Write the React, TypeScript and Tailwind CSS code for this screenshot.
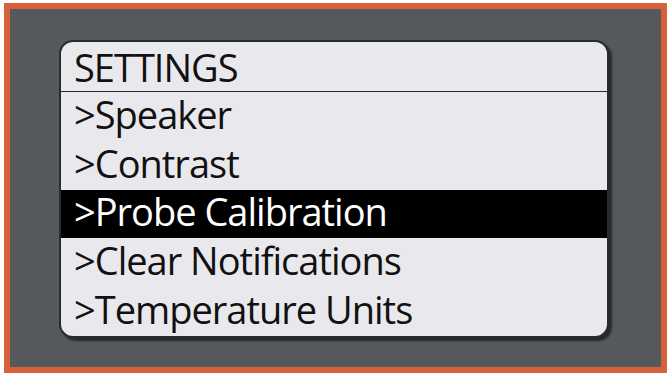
import React from 'react';

const items = ['>Speaker', '>Contrast', '>Probe Calibration', '>Clear Notifications', '>Temperature Units'];
const selected = 2;

export default function App() {
  return (
    <div className="w-[670px] h-[376px] bg-white pt-[3px] pl-[4px]">
      <div className="w-[663px] h-[370px] border-[6px] border-[#d6603a] bg-[#56595b] pt-[31px] pl-[49px]">
        <div
          className="w-[550px] h-[298px] rounded-[14px] border-2 border-[#2a2b2d] bg-[#e9e9ed] overflow-hidden shadow-[3px_3px_2px_rgba(0,0,0,0.55)] text-[#111] text-[38px] leading-none tracking-[-1px]"
          style={{ fontFamily: '"Open Sans", "Liberation Sans", sans-serif' }}
        >
          <div className="h-[50px] border-b-[1.5px] border-[#2a2b2d] pl-[13px] pt-[6px]">SETTINGS</div>
          {items.map((label, i) => (
            <div
              key={label}
              className={
                i === selected
                  ? 'h-[48px] pl-[13px] pt-[2px] bg-black text-white'
                  : 'h-[49px] pl-[13px] pt-[3px]'
              }
            >
              {label}
            </div>
          ))}
        </div>
      </div>
    </div>
  );
}
